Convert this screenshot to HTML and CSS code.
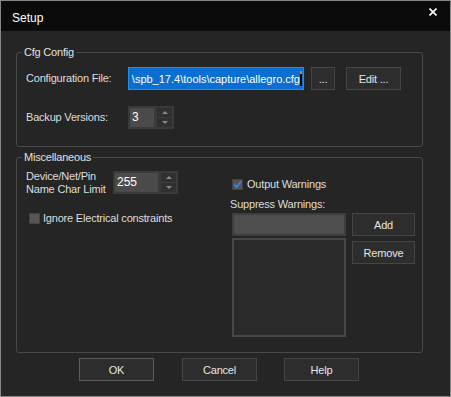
FILE: index.html
```html
<!DOCTYPE html>
<html lang="en">
<head>
    <meta charset="UTF-8">
    <meta name="viewport" content="width=device-width, initial-scale=1.0">
    <title>Setup</title>
    <link rel="stylesheet" href="styles.css">
</head>
<body>
    <div class="window">
        <div class="titlebar">
            <span class="title">Setup</span>
            <svg class="close" width="8" height="8" viewBox="0 0 8 8">
                <path d="M0.5 0.5 L7.5 7.5 M7.5 0.5 L0.5 7.5" stroke="#fff" stroke-width="1.6"/>
            </svg>
        </div>

        <div class="content">
            <fieldset class="group cfg">
                <legend>Cfg Config</legend>
                <div class="cfg-grid">
                    <label>Configuration File:</label>
                    <div class="file-row">
                        <div class="path-field">
                            <span class="path-text">\spb_17.4\tools\capture\allegro.cfg</span>
                            <span class="caret"></span>
                        </div>
                        <button class="btn browse">...</button>
                        <button class="btn edit">Edit ...</button>
                    </div>
                    <label>Backup Versions:</label>
                    <div class="spin backup">
                        <span class="spin-value">3</span>
                        <span class="spin-btns">
                            <span class="spin-btn"><i class="arrow up"></i></span>
                            <span class="spin-btn"><i class="arrow down"></i></span>
                        </span>
                    </div>
                </div>
            </fieldset>

            <fieldset class="group misc">
                <legend>Miscellaneous</legend>
                <div class="misc-cols">
                    <div class="misc-left">
                        <div class="limit-row">
                            <label class="limit-label">Device/Net/Pin<br>Name Char Limit</label>
                            <div class="spin limit">
                                <span class="spin-value">255</span>
                                <span class="spin-btns">
                                    <span class="spin-btn"><i class="arrow up"></i></span>
                                    <span class="spin-btn"><i class="arrow down"></i></span>
                                </span>
                            </div>
                        </div>
                        <div class="check-row ignore">
                            <span class="check"></span>
                            <span>Ignore Electrical constraints</span>
                        </div>
                    </div>

                    <div class="misc-right">
                        <div class="check-row output">
                            <span class="check">
                                <svg width="9" height="9" viewBox="0 0 9 9">
                                    <path d="M1 4.5 L3.5 7 L8 1.5" fill="none" stroke="#2b8ff0" stroke-width="1.6"/>
                                </svg>
                            </span>
                            <span>Output Warnings</span>
                        </div>
                        <div class="suppress-label">Suppress Warnings:</div>
                        <div class="suppress">
                            <div class="suppress-fields">
                                <div class="entry"></div>
                                <div class="list"></div>
                            </div>
                            <div class="suppress-btns">
                                <button class="btn side">Add</button>
                                <button class="btn side">Remove</button>
                            </div>
                        </div>
                    </div>
                </div>
            </fieldset>

            <div class="footer">
                <button class="btn dlg ok">OK</button>
                <button class="btn dlg cancel">Cancel</button>
                <button class="btn dlg">Help</button>
            </div>
        </div>
    </div>
</body>
</html>
```

FILE: styles.css
```css
* {
    margin: 0;
    padding: 0;
    box-sizing: border-box;
}

body {
    background-color: #252525;
    font-family: "Liberation Sans", Arial, sans-serif;
    font-size: 11px;
    color: #dedede;
}

.window {
    width: 451px;
    height: 397px;
    border: 1px solid #888;
    background-color: #252525;
}

.titlebar {
    height: 30px;
    background-color: #0b0b0b;
    display: flex;
    align-items: flex-start;
}

.title {
    font-size: 12px;
    line-height: 14px;
    color: #fff;
    padding: 10px 0 0 11px;
}

.close {
    margin: 7px 13px 0 auto;
}

.content {
    padding-left: 15px;
}

label,
.check-row,
.suppress-label {
    letter-spacing: -0.2px;
    line-height: 13px;
}

/* group boxes */
.group {
    width: 407px;
    min-width: 0;
    border: 1px solid #4a4a4a;
    border-radius: 3px;
}

.group legend {
    margin-left: -4px;
    padding: 0 2px;
    line-height: 13px;
    letter-spacing: -0.2px;
    color: #e2e2e2;
}

.cfg {
    margin-top: 15px;
    padding: 8px 0 17px 9px;
}

.cfg-grid {
    display: grid;
    grid-template-columns: 102px auto;
    row-gap: 16px;
    align-items: center;
}

.file-row {
    display: flex;
    height: 23px;
}

.path-field {
    width: 176px;
    height: 23px;
    border: 1px solid #2a8de0;
    background-color: #0a6fd2;
    color: #fff;
    display: flex;
    justify-content: flex-end;
    align-items: center;
    overflow: hidden;
    padding-right: 1px;
    white-space: nowrap;
}

.caret {
    flex: none;
    width: 2px;
    height: 15px;
    background-color: #000;
    border-top: 3px solid #e07b20;
}

/* buttons */
.btn {
    font-family: "Liberation Sans", Arial, sans-serif;
    font-size: 11px;
    letter-spacing: -0.2px;
    color: #e6e6e6;
    background-color: #2d2d2d;
    border: 1px solid #454545;
    height: 23px;
}

.browse {
    width: 24px;
    margin-left: 7px;
}

.edit {
    width: 55px;
    margin-left: 11px;
}

/* spin boxes */
.spin {
    display: flex;
    height: 23px;
    padding: 2px;
    gap: 3px;
    background-color: #3a3a3a;
}

.backup {
    width: 46px;
}

.limit {
    width: 65px;
    margin-top: 1px;
}

.spin-value {
    flex: 1;
    background-color: #4b4b4b;
    color: #fff;
    font-size: 12px;
    line-height: 19px;
    padding-left: 2px;
}

.spin-btns {
    width: 15px;
    display: flex;
    flex-direction: column;
    gap: 1px;
}

.spin-btn {
    flex: 1;
    background-color: #303030;
    display: flex;
    justify-content: center;
    align-items: center;
}

.arrow {
    width: 0;
    height: 0;
    border-left: 3px solid transparent;
    border-right: 3px solid transparent;
}

.arrow.up {
    border-bottom: 3px solid #8a8a8a;
}

.arrow.down {
    border-top: 3px solid #8a8a8a;
}

/* miscellaneous */
.misc {
    margin-top: 4px;
    padding: 0 0 15px 9px;
}

.misc-cols {
    display: flex;
}

.misc-left {
    width: 204px;
    padding-top: 6px;
}

.limit-row {
    display: flex;
    align-items: flex-start;
}

.limit-label {
    width: 87px;
}

.check-row {
    display: flex;
    align-items: center;
}

.check {
    width: 11px;
    height: 11px;
    background-color: #555;
    border: 1px solid #424242;
    display: flex;
    justify-content: center;
    align-items: center;
}

.ignore {
    margin-top: 16px;
}

.ignore .check {
    margin: 0 3px 0 3px;
}

.misc-right {
    padding-top: 14px;
}

.output .check {
    margin: 0 4px 0 2px;
}

.suppress-label {
    margin-top: 7px;
}

.suppress {
    display: flex;
    margin-top: 2px;
    padding-left: 2px;
}

.suppress-fields {
    display: flex;
    flex-direction: column;
    gap: 2px;
}

.entry {
    width: 114px;
    height: 23px;
    background-color: #4e4e4e;
    border: 2px solid #3d3d3d;
}

.list {
    width: 114px;
    height: 99px;
    background-color: #2a2a2a;
    border: 2px solid #474747;
}

.suppress-btns {
    display: flex;
    flex-direction: column;
    gap: 5px;
    margin-left: 6px;
}

.side {
    width: 63px;
}

/* dialog buttons */
.footer {
    display: flex;
    margin-top: 5px;
    padding-left: 63px;
}

.dlg {
    width: 75px;
}

.ok {
    border-color: #5c5c5c;
    margin-right: 28px;
}

.cancel {
    margin-right: 27px;
}
```
